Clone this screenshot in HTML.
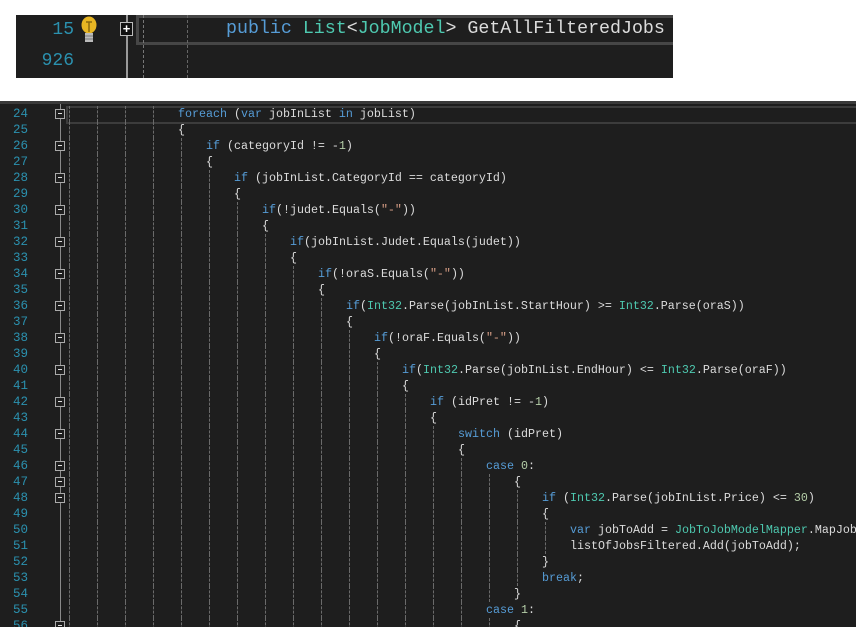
<!DOCTYPE html>
<html><head><style>
body{margin:0;width:856px;height:627px;background:#fff;position:relative;overflow:hidden;font-family:"Liberation Mono",monospace}
#top{position:absolute;left:16px;top:15px;width:657px;height:63px;background:#1e1e1e;overflow:hidden}
#bot{position:absolute;left:0;top:101px;width:856px;height:526px;background:#1e1e1e;overflow:hidden;border-top:3px solid #3a3a3a;box-sizing:border-box}
.ln{position:absolute;color:#2b91af;text-align:right}
.c{position:absolute;white-space:pre;color:#dcdcdc;font-size:11.67px;line-height:16px}
.k{color:#569cd6}.t{color:#4ec9b0}.n{color:#b5cea8}.s{color:#d69d85}
.g{position:absolute;width:0;border-left:1px dashed #6a6a6a}
.fb{position:absolute;width:8px;height:8px;border:1px solid #aaa;background:#1e1e1e}
.fb:after{content:"";position:absolute;left:2px;top:3px;width:4px;height:1px;background:#ddd}
</style></head><body>
<div id="top">
 <div class="ln" style="left:20px;width:38px;top:2px;font-size:18px;line-height:26px">15</div>
 <div class="ln" style="left:20px;width:38px;top:33px;font-size:18px;line-height:26px">926</div>
 <svg style="position:absolute;left:64px;top:1px" width="20" height="28"><ellipse cx="9" cy="9" rx="7.5" ry="8.5" fill="#e8b623"/><path d="M6 6h6M9 6v10" stroke="#8a6a10" stroke-width="1.5"/><rect x="5" y="17" width="8" height="9" fill="#bbb"/><path d="M5 20h8M5 23h8" stroke="#777"/></svg>
 <div style="position:absolute;left:110px;top:0;width:2px;height:63px;background:#9a9a9a"></div>
 <div style="position:absolute;left:104px;top:7px;width:11px;height:12px;border:1px solid #bbb;background:#111;color:#fff;font:bold 13px/12px 'Liberation Sans';text-align:center">+</div>
 <div style="position:absolute;left:120px;top:0;width:540px;height:24px;border:3px solid #464646;border-right:none"></div>
 <div class="g" style="left:127px;top:0;height:63px;border-left:1px dashed #777"></div>
 <div class="g" style="left:171px;top:0;height:63px;border-left:1px dashed #666"></div>
 <div style="position:absolute;left:210px;top:1px;white-space:pre;font-size:18.3px;line-height:26px;color:#dcdcdc"><span class="k">public</span> <span class="t">List</span>&lt;<span class="t">JobModel</span>&gt; GetAllFilteredJobs</div>
</div>
<div id="bot"></div>
<script>
var L=[
[24,4,'<span class="k">foreach</span> (<span class="k">var</span> jobInList <span class="k">in</span> jobList)',1],
[25,4,'{'],
[26,5,'<span class="k">if</span> (categoryId != -<span class="n">1</span>)',1],
[27,5,'{'],
[28,6,'<span class="k">if</span> (jobInList.CategoryId == categoryId)',1],
[29,6,'{'],
[30,7,'<span class="k">if</span>(!judet.Equals(<span class="s">"-"</span>))',1],
[31,7,'{'],
[32,8,'<span class="k">if</span>(jobInList.Judet.Equals(judet))',1],
[33,8,'{'],
[34,9,'<span class="k">if</span>(!oraS.Equals(<span class="s">"-"</span>))',1],
[35,9,'{'],
[36,10,'<span class="k">if</span>(<span class="t">Int32</span>.Parse(jobInList.StartHour) &gt;= <span class="t">Int32</span>.Parse(oraS))',1],
[37,10,'{'],
[38,11,'<span class="k">if</span>(!oraF.Equals(<span class="s">"-"</span>))',1],
[39,11,'{'],
[40,12,'<span class="k">if</span>(<span class="t">Int32</span>.Parse(jobInList.EndHour) &lt;= <span class="t">Int32</span>.Parse(oraF))',1],
[41,12,'{'],
[42,13,'<span class="k">if</span> (idPret != -<span class="n">1</span>)',1],
[43,13,'{'],
[44,14,'<span class="k">switch</span> (idPret)',1],
[45,14,'{'],
[46,15,'<span class="k">case</span> <span class="n">0</span>:',1],
[47,16,'{',1],
[48,17,'<span class="k">if</span> (<span class="t">Int32</span>.Parse(jobInList.Price) &lt;= <span class="n">30</span>)',1],
[49,17,'{'],
[50,18,'<span class="k">var</span> jobToAdd = <span class="t">JobToJobModelMapper</span>.MapJobToJobModel(jobInList);'],
[51,18,'listOfJobsFiltered.Add(jobToAdd);'],
[52,17,'}'],
[53,17,'<span class="k">break</span>;'],
[54,16,'}'],
[55,15,'<span class="k">case</span> <span class="n">1</span>:'],
[56,16,'{',1]];
var b=document.getElementById('bot'),h='';
h+='<div style="position:absolute;left:60px;top:0;width:1px;height:526px;background:#8a8a8a"></div>';
h+='<div style="position:absolute;left:66px;top:2px;width:800px;height:14px;border:2px solid #3c3c3c"></div>';
L.forEach(function(r){
 var y=2+16*(r[0]-24);
 h+='<div class="ln" style="left:0;width:28px;top:'+y+'px;font-size:12.5px;line-height:16px">'+r[0]+'</div>';
 if(r[3])h+='<div class="fb" style="left:55px;top:'+(y+3)+'px"></div>';
 for(var k=0;k<r[1];k++)h+='<div class="g" style="left:'+(69+28*k)+'px;top:'+y+'px;height:16px"></div>';
 h+='<div class="c" style="left:'+(66+28*r[1])+'px;top:'+y+'px">'+r[2]+'</div>';
});
b.innerHTML=h;
</script>
</body></html>
